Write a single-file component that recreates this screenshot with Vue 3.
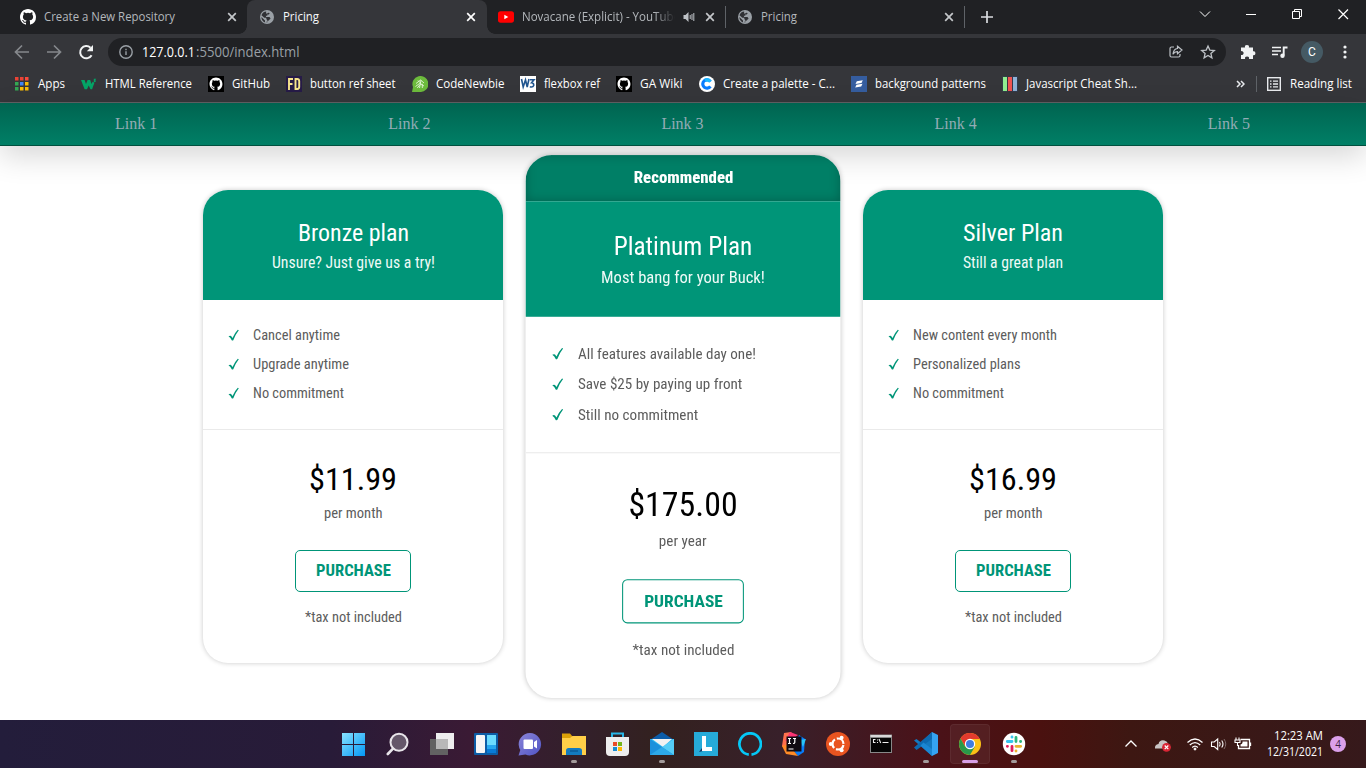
<script setup>
import { h } from 'vue'

// Single line of text fitted to a fixed advance width
const Fit = (p) =>
  h('svg', { class: 'fit', width: p.w, height: p.h || 16 }, [
    h('text', { x: 0, y: p.b || 12, textLength: p.w, lengthAdjust: 'spacingAndGlyphs' }, p.t),
  ])
Fit.props = ['t', 'w', 'h', 'b']

const GH = 'M8 0C3.58 0 0 3.58 0 8c0 3.54 2.29 6.53 5.47 7.59.4.07.55-.17.55-.38 0-.19-.01-.82-.01-1.49-2.01.37-2.53-.49-2.69-.94-.09-.23-.48-.94-.82-1.13-.28-.15-.68-.52-.01-.53.63-.01 1.08.58 1.23.82.72 1.21 1.87.87 2.33.66.07-.52.28-.87.51-1.07-1.78-.2-3.64-.89-3.64-3.95 0-.87.31-1.59.82-2.15-.08-.2-.36-1.02.08-2.12 0 0 .67-.21 2.2.82a7.6 7.6 0 0 1 4 0c1.53-1.04 2.2-.82 2.2-.82.44 1.1.16 1.92.08 2.12.51.56.82 1.27.82 2.15 0 3.07-1.87 3.75-3.65 3.95.29.25.54.73.54 1.48 0 1.07-.01 1.93-.01 2.2 0 .21.15.46.55.38A8 8 0 0 0 16 8c0-4.42-3.58-8-8-8z'

const tabs = [
  { id: 'gh', t: 'Create a New Repository', w: 131 },
  { id: 'p1', t: 'Pricing', w: 36, active: true },
  { id: 'yt', t: 'Novacane (Explicit) - YouTube', w: 158 },
  { id: 'p2', t: 'Pricing', w: 36 },
]
const marks = [
  { i: 'apps', t: 'Apps', w: 27 },
  { i: 'w3c', t: 'HTML Reference', w: 87 },
  { i: 'gh', t: 'GitHub', w: 38 },
  { i: 'fd', t: 'button ref sheet', w: 85.5 },
  { i: 'cn', t: 'CodeNewbie', w: 68.5 },
  { i: 'w3', t: 'flexbox ref', w: 56 },
  { i: 'gh', t: 'GA Wiki', w: 42.5 },
  { i: 'co', t: 'Create a palette - C...', w: 112 },
  { i: 'bg', t: 'background patterns', w: 111 },
  { i: 'js', t: 'Javascript Cheat Sh...', w: 111 },
]
const appColors = ['#ea4335', '#ea4335', '#fb4a3c', '#34a853', '#4285f4', '#fbbc04', '#34a853', '#fbbc04', '#fbbc04']
const plans = [
  {
    name: 'Bronze plan', nw: 111, sub: 'Unsure? Just give us a try!', sw: 163,
    items: [['Cancel anytime', 87], ['Upgrade anytime', 96], ['No commitment', 91]],
    price: '$11.99', pw: 88, per: 'per month', perw: 58.5,
  },
  {
    name: 'Platinum Plan', nw: 132, sub: 'Most bang for your Buck!', sw: 156, top: true,
    items: [['All features available day one!', 169.5], ['Save $25 by paying up front', 156.5], ['Still no commitment', 114.5]],
    price: '$175.00', pw: 104, per: 'per year', perw: 45.5,
  },
  {
    name: 'Silver Plan', nw: 100, sub: 'Still a great plan', sw: 100,
    items: [['New content every month', 144], ['Personalized plans', 107.5], ['No commitment', 91]],
    price: '$16.99', pw: 88, per: 'per month', perw: 58.5,
  },
]
const apps = ['start', 'search', 'task', 'widgets', 'chat', 'files', 'store', 'mail', 'L', 'alexa', 'ij', 'ubuntu', 'cmd', 'code', 'chrome', 'slack']
const running = ['files', 'mail', 'code', 'chrome', 'slack']
</script>

<template>
  <div class="screen">
    <div class="tabbar">
      <div v-for="tab in tabs" :key="tab.id" class="tab" :class="[tab.id, { active: tab.active }]">
        <svg v-if="tab.id === 'gh'" width="16" height="16" viewBox="0 0 16 16"><path :d="GH" fill="#fff" /></svg>
        <svg v-else-if="tab.id === 'yt'" width="16" height="16" viewBox="0 0 16 16"><rect y="2.3" width="16" height="11.4" rx="2.6" fill="#f00" /><path d="M6.3 5.7v4.6l4-2.3z" fill="#fff" /></svg>
        <svg v-else class="globe" width="14" height="14" viewBox="0 0 14 14"><circle cx="7" cy="7" r="7" fill="#9aa0a6" /><path d="M6.2 1.5C4 1.7 2.2 3 1.5 5.200l2.800 2.600h2v1.300l1 1.100v2.200c-.6.200-1.600.100-2.300-.200V10.600L1.400 7C1.300 10 3.600 12.600 6.800 12.700V11l1.600-.2 2.200-2.400-1.100-1.300H6.100l-.3-1.300h1.500V4.600h1.600l.8-1.500-1.500-.4-1 .9H6z" fill="#303135" /></svg>
        <Fit :t="tab.t" :w="tab.w" />
        <svg v-if="tab.id === 'yt'" class="sound" width="12" height="12" viewBox="0 0 12 12"><path d="M.5 4v4h2l3 3V1l-3 3z" fill="#bdc1c6" /><path d="M7.200 4v4M9 3v6M10.800 2v8" stroke="#bdc1c6" fill="none" /></svg>
        <svg class="close" width="12" height="12" viewBox="0 0 12 12"><path d="M2.200 2.200l7.600 7.600M9.800 2.200l-7.600 7.600" stroke="currentColor" stroke-width="1.700" /></svg>
      </div>
      <svg class="plus" width="12" height="12" viewBox="0 0 12 12"><path d="M6 0v12M0 6h12" stroke="#dadce0" stroke-width="1.700" /></svg>
      <svg class="winbtns" width="156" height="28" viewBox="0 0 156 28" fill="none" stroke="#fff" stroke-width="1">
        <path d="M10 11.500l5 5 5-5" /><path d="M56 14.500h10" /><path d="M102.500 11.500h7v7h-7zM104.500 11v-1.500h7v7H110" /><path d="M148.500 9.500l9.500 9.500M158 9.500l-9.500 9.500" stroke-width="1.200" />
      </svg>
    </div>

    <div class="toolbar">
      <svg class="navicons" width="94" height="36" viewBox="0 0 94 36" fill="none">
        <path d="M29 18H16M22 11.500L15.500 18l6.500 6.500M47 18h13M54 11.500l6.500 6.500-6.500 6.500" stroke="#85888c" stroke-width="1.700" />
        <path d="M91.600 21.200A6.100 6.100 0 1 1 90.500 13.800" stroke="#f1f3f4" stroke-width="2" /><path d="M93 11v6.200h-6.200z" fill="#f1f3f4" />
      </svg>
      <div class="omni">
        <svg width="16" height="16" viewBox="0 0 16 16" fill="none" stroke="#9aa0a6" stroke-width="1.400"><circle cx="8" cy="8" r="6.200" /><path d="M8 7.300v3.800M8 4.700v1.500" /></svg>
        <Fit class="host" t="127.0.0.1" :w="53" :h="20" :b="15" /><Fit class="path" t=":5500/index.html" :w="103.5" :h="20" :b="15" />
        <svg class="share" width="16" height="16" viewBox="0 0 16 16" fill="none" stroke="#bdc1c6" stroke-width="1.200"><path d="M6 3H3.500Q2 3 2 4.500v7Q2 13 3.500 13h7Q12 13 12 11.500V10" /><path d="M9.500 2.200L14 6l-4.500 3.800V7.700Q6.700 7.500 5 10.300 5.500 5 9.500 4.500z" /></svg>
        <svg class="star" width="16" height="16" viewBox="0 0 16 16"><path d="M8 2l1.800 4.100 4.500.4-3.400 2.900 1 4.400L8 11.500l-3.900 2.300 1-4.400-3.400-2.900 4.500-.4z" fill="none" stroke="#bdc1c6" stroke-width="1.300" /></svg>
      </div>
      <svg class="ext" width="16" height="16" viewBox="0 0 16 16"><path d="M1 3.500h4a2 2 0 1 1 3.900 0H13v3.800a2 2 0 1 1 0 3.900V15H9a2 2 0 1 0-3.900 0H1v-4a2 2 0 1 0 0-3.800z" fill="#f1f3f4" /></svg>
      <svg class="media" width="17" height="16" viewBox="0 0 17 16"><path d="M1 3.500h9M1 7h9M1 10.500h6" stroke="#f1f3f4" stroke-width="1.500" /><path d="M12.700 11.500V3.500h3.800" fill="none" stroke="#f1f3f4" stroke-width="1.900" /><circle cx="11.500" cy="11.800" r="2.200" fill="#f1f3f4" /></svg>
      <span class="avatar">C</span>
      <svg class="dots" width="4" height="14" viewBox="0 0 4 14" fill="#f1f3f4"><circle cx="2" cy="2" r="1.600" /><circle cx="2" cy="7" r="1.600" /><circle cx="2" cy="12" r="1.600" /></svg>
    </div>

    <div class="bookmarks">
      <div v-for="m in marks" :key="m.t" class="mark">
        <svg width="16" height="16" viewBox="0 0 16 16">
          <g v-if="m.i === 'apps'"><rect v-for="(c, n) in appColors" :key="n" :x="1 + (n % 3) * 5" :y="1 + Math.floor(n / 3) * 5" width="3.500" height="3.500" :fill="c" /></g>
          <path v-else-if="m.i === 'w3c'" d="M0 4h3.600l1.400 4L6.600 4h2.600l1.300 4 1.100-2.300 1.800 1-2.300 6.500H9.500L7.700 9.600 6 13.200H3.600zM12.800 2.800h2.500L14.100 4.300h.5q1 1.800-1.800 2" fill="#04a466" />
          <g v-else-if="m.i === 'gh'"><rect width="16" height="16" fill="#000" /><path :d="GH" fill="#fff" transform="translate(1.500 1.500) scale(.81)" /></g>
          <g v-else-if="m.i === 'fd'"><rect width="16" height="16" fill="#261b47" /><path d="M3 14V3h4M3 8h3.500M9.500 3v10h1.700q2-.2 2-2V5q0-2-2-2z" fill="none" stroke="#f7e58c" stroke-width="1.900" /></g>
          <g v-else-if="m.i === 'cn'"><path d="M0 16l1-5A8 8 0 1 1 8 16z" fill="#6cbb3c" /><path d="M4 7.500L8.500 4l3.500 3M6 4.500l3 3M9 4l-1.500 8M3.500 10.500l4-3 4.500 2.500M10.300 7.800v4.200M5.300 12l2.700-3.500" fill="none" stroke="#e6f5dd" stroke-width=".9" /></g>
          <g v-else-if="m.i === 'w3'"><rect width="16" height="16" fill="#fff" /><path d="M1.500 3l1.700 8L5.500 4l1.700 7L9 3M10 3.800h4l-2.500 3q2.500.3 2.200 2.700-.8 2.200-3.900 1.300" fill="none" stroke="#20558f" stroke-width="1.600" /></g>
          <g v-else-if="m.i === 'co'"><circle cx="8" cy="8" r="8" fill="#fff" /><path d="M11.400 5.600A4.200 4.200 0 1 0 11.400 10.400" fill="none" stroke="#087cff" stroke-width="3.200" /><path d="M11.400 5.600A4.200 4.200 0 0 0 6 4.400" fill="none" stroke="#19b8ff" stroke-width="3.200" /></g>
          <g v-else-if="m.i === 'bg'"><rect width="16" height="16" fill="#355d9f" /><path d="M5.800 5.300l6-1-1.300 2.700-6 1zM5.500 8.800l6-1-1.300 2.700-6 1z" fill="#fff" /></g>
          <g v-else stroke="#252b3d" stroke-width=".8"><path d="M.5.5h5v15h-5z" fill="#90ee90" /><path d="M5.500.5h5v15h-5z" fill="#ef5350" /><path d="M10.500.5h5v15h-5z" fill="#8fb2d6" /></g>
        </svg>
        <Fit :t="m.t" :w="m.w" />
      </div>
      <svg class="more" width="9" height="8" viewBox="0 0 9 8"><path d="M1 1l3 3-3 3M5 1l3 3-3 3" fill="none" stroke="#e8eaed" stroke-width="1.500" /></svg>
      <i class="sep"></i>
      <svg class="rl" width="14" height="14" viewBox="0 0 14 14" stroke="#e8eaed" fill="none"><rect x=".7" y=".7" width="12.600" height="12.600" stroke-width="1.400" /><path d="M3 4.200h1.500M6 4.200h5M3 7h1.500M6 7h5M3 9.800h1.500M6 9.800h5" stroke-width="1.300" /></svg>
      <Fit t="Reading list" :w="62" />
    </div>

    <main class="page">
      <nav><a v-for="n in 5" :key="n">Link {{ n }}</a></nav>
      <div class="cards">
        <section v-for="p in plans" :key="p.name" class="card" :class="{ top: p.top }">
          <div v-if="p.top" class="rec"><Fit t="Recommended" :w="95" :h="20" :b="16" /></div>
          <header>
            <Fit class="name" :t="p.name" :w="p.nw" :h="30" :b="24" />
            <Fit class="sub" :t="p.sub" :w="p.sw" :h="22" :b="21" />
          </header>
          <ul>
            <li v-for="it in p.items" :key="it[0]">
              <svg class="check" width="12" height="12" viewBox="0 0 12 12"><path d="M.5 7.200Q2 6.200 3.100 7L4.500 8.900Q6.500 4.200 9.800.8l1 .4Q7.500 5.300 5.300 11.300q-.6.500-1.400.2Q2.600 8.600.500 7.200z" fill="#009578" /></svg>
              <Fit :t="it[0]" :w="it[1]" :h="19" :b="15" />
            </li>
          </ul>
          <div class="pay">
            <Fit class="price" :t="p.price" :w="p.pw" :h="38" :b="31" />
            <Fit :t="p.per" :w="p.perw" :h="18" :b="14" />
            <button><Fit t="PURCHASE" :w="75" :h="20" :b="16" /></button>
            <Fit t="*tax not included" :w="97" :h="18" :b="14" />
          </div>
        </section>
      </div>
    </main>

    <footer class="taskbar">
      <div v-for="a in apps" :key="a" class="app" :class="{ current: a === 'chrome', run: running.includes(a) }">
        <svg width="24" height="24" viewBox="0 0 24 24">
          <g v-if="a === 'start'" fill="url(#win)"><defs><linearGradient id="win" x1="0" y1="0" x2="24" y2="24" gradientUnits="userSpaceOnUse"><stop stop-color="#8be4ff" /><stop offset="1" stop-color="#0096f5" /></linearGradient></defs><path d="M0 1h11v11H0zM12 1h11v11H12zM0 13h11v11H0zM12 13h11v11H12z" /></g>
          <g v-else-if="a === 'search'" fill="#65576a" stroke="#e8e5ea"><circle cx="13" cy="10.200" r="8.500" stroke-width="2" /><path d="M7 16.700L1.800 22" stroke-width="2.600" stroke-linecap="round" /></g>
          <g v-else-if="a === 'task'"><path d="M6 1h18v16H6z" fill="#eee" /><path d="M0 7h18v16H0z" fill="#626262" /><path d="M6 7h12v10H6z" fill="#b8b8b8" /></g>
          <g v-else-if="a === 'widgets'"><rect y="1" width="24" height="22" rx="1" fill="#0c5da6" /><rect x="2" y="3" width="9" height="18" rx="1" fill="#f6f6f6" /><path d="M13 3h9v10h-9z" fill="#6bdcff" /><path d="M13 13h9v4h-9z" fill="#26a8f0" /><path d="M13 17h9v4h-9z" fill="#087bd7" /></g>
          <g v-else-if="a === 'chat'"><defs><linearGradient id="cht" x1="0" y1="0" x2="1" y2="1"><stop stop-color="#8a84d8" /><stop offset="1" stop-color="#5054c4" /></linearGradient></defs><path d="M.5 23.500l1.800-5.500A11.200 11.200 0 1 1 7.500 22.500z" fill="url(#cht)" /><rect x="5.500" y="7.500" width="9.500" height="9.500" rx="1" fill="#fff" /><path d="M16 10l3-2v8.500l-3-2z" fill="#fff" /></g>
          <g v-else-if="a === 'files'"><path d="M0 1.500h8l2.500 3H24v17H0z" fill="#dca108" /><path d="M0 6h8l2.500-2H24v19H0z" fill="#ffcf48" /><path d="M4 23v-4.500Q4 16 6.500 16h10.500Q20 16 20 18.500V23z" fill="#137bc0" /><path d="M8 19h8" stroke="#0b5b9a" stroke-width="1.500" /></g>
          <g v-else-if="a === 'store'"><path d="M6 6V1.500h11V6" fill="none" stroke="#29b7e8" stroke-width="2" /><path d="M0 5h23v15q0 4-4 4H4q-4 0-4-4z" fill="#eee" /><path d="M7 10h4v4H7z" fill="#e94b28" /><path d="M12 10h4v4h-4z" fill="#74b51a" /><path d="M7 15h4v4H7z" fill="#168bd2" /><path d="M12 15h4v4h-4z" fill="#ffb900" /></g>
          <g v-else-if="a === 'mail'"><path d="M0 8l12-8 12 8z" fill="#0b5ca8" /><path d="M0 7h24v16H0z" fill="#2bb8f0" /><path d="M2 7h20l-9 8z" fill="#f2f2f2" /><path d="M0 7l24 16H0z" fill="#1b91dc" /><path d="M24 7v16L12 15z" fill="#55cdf6" /><path d="M12 15L24 23H0z" fill="#2da9e8" /></g>
          <g v-else-if="a === 'L'"><path d="M0 0h24v24H0z" fill="#26abd9" /><path d="M8 4v12l-3 4 4-1 3-3z" fill="#12355f" /><path d="M8 4h4v11h6v4H8z" fill="#fff" /></g>
          <path v-else-if="a === 'alexa'" d="M10.800 22.600A10.700 10.700 0 1 1 13.500 22.600" fill="none" stroke="#05c8f6" stroke-width="2.700" />
          <g v-else-if="a === 'ij'"><path d="M2 1l7-1 4 5-9 13-4-4z" fill="#ff704d" /><path d="M8 0l8 3-5 4-8 2z" fill="#fc3475" /><path d="M17 3l6 4-1 13-6 4-5-6z" fill="#087cfa" /><path d="M0 14l6-2 10 12-12-2z" fill="#ff8b27" /><path d="M18 8l6-1-3 8z" fill="#29c5fa" /><rect x="4.500" y="4.500" width="15" height="15" fill="#100b12" /><path d="M6 6.500h3M7.500 6.500v5M6 11.500h3M11 6.500h3M12.800 6.500v4q0 1-1.800 1M6.500 17h5" fill="none" stroke="#fff" stroke-width="1.200" /></g>
          <g v-else-if="a === 'ubuntu'"><circle cx="12" cy="12" r="12" fill="#e95420" /><circle cx="12" cy="12" r="5.500" fill="none" stroke="#fff" stroke-width="2.200" stroke-dasharray="9.500 2.010" stroke-dashoffset="-1" /><circle cx="4.800" cy="12" r="2" fill="#fff" /><circle cx="15.600" cy="5.800" r="2" fill="#fff" /><circle cx="15.600" cy="18.200" r="2" fill="#fff" /></g>
          <g v-else-if="a === 'cmd'"><rect x="0" y="2.500" width="22" height="18.500" fill="#888" /><path d="M.5 3h21v2h-21z" fill="#d8d8d8" /><path d="M1 6h20v14H1z" fill="#050505" /><path d="M5.500 7.500H3.500v3h2M7.500 7.500v1M7.500 10v1M9 7l1.700 4M12.500 10.500h6" stroke="#eee" stroke-width="1.100" fill="none" /></g>
          <g v-else-if="a === 'code'"><path d="M18 0L7 10.500 2.500 7 0 8.500 18 24z" fill="#1478bf" /><path d="M18 0v7L2.500 18 0 15.500z" fill="#0d69b0" /><path d="M18 24L6.500 13.500 9.500 10.500 18 17z" fill="#1b86d3" /><path d="M18 0l6 3v18l-6 3z" fill="#35a3f2" /></g>
          <g v-else-if="a === 'chrome'"><circle cx="12" cy="12" r="11" fill="#fbc116" /><path d="M12 12V7h9.800A11 11 0 0 0 2.500 6.500L7.200 14.500z" fill="#e33b2e" /><path d="M12 12L16.800 14.700 12 23A11 11 0 0 1 2.500 6.500L7.200 14.700z" fill="#29994a" /><circle cx="12" cy="12" r="5.200" fill="#fff" /><circle cx="12" cy="12" r="4" fill="#3f7de0" /></g>
          <g v-else fill="none" stroke-width="2.800" stroke-linecap="round"><circle cx="12" cy="12" r="11.200" fill="#fff" /><path d="M10 5v.2M10 9.500H5.300" stroke="#36c5f0" /><path d="M14 5.300V9.500M18.500 9.500h.2" stroke="#2eb67d" /><path d="M14 18.800v.2M14 14.300h4.700" stroke="#ecb22e" /><path d="M10 14.300v4.400M5.300 14.300h.2" stroke="#e01e5a" /></g>
        </svg>
      </div>
      <div class="tray">
        <svg width="156" height="24" viewBox="0 0 156 24" fill="none" stroke="#fff">
          <path d="M5.500 14.500L11 9l5.500 5.500" stroke-width="1.300" />
          <path d="M35 16.500q-.5-4 3.500-4.500 1-4.500 6-3.500 3 .7 3.500 3.500 3 1 2 4.500z" fill="#c9c5c4" stroke="none" /><circle cx="46.500" cy="15.300" r="4.400" fill="#d92534" stroke="none" /><path d="M44.700 13.500l3.600 3.600M48.300 13.500l-3.600 3.600" stroke-width="1.200" />
          <path d="M67.500 10.500q7.500-7 15 0M69.800 13q5.200-4.800 10.400 0M72.200 15.400q2.800-2.600 5.600 0" stroke-width="1.300" /><circle cx="75" cy="17" r="1" fill="#fff" />
          <path d="M91.500 10v4.500h2.700l3.500 3V7l-3.500 3zM99.500 10q1.400 2 0 4.500M101.700 8.500q2.600 3.500 0 7" stroke-width="1.100" /><path d="M104 7q3.500 5 0 10" stroke="#806a6a" />
          <path d="M120.500 7.500h9v9h-11v-3.500M130.500 10.500v3.500" stroke-width="1.300" /><path d="M122.500 9.500h5V14.500h-7v-2q2-.5 2-2z" fill="#fff" stroke="none" /><path d="M116 5.500v3M119 5.500v3M115 8h5v2.500h-5zM117.500 10v4" stroke-width="1.100" />
        </svg>
        <div class="clock"><Fit t="12:23 AM" :w="49" :h="16" /><Fit t="12/31/2021" :w="56" :h="16" /></div>
        <span class="count">4</span>
      </div>
    </footer>
  </div>
</template>

<style>
html, body { margin: 0; overflow: hidden; background: #fff; }
</style>

<style scoped>
.screen { width: 1366px; height: 768px; display: flex; flex-direction: column; overflow: hidden; font-family: "Open Sans", "Noto Sans", sans-serif; font-size: 12px; }
.screen * { box-sizing: border-box; }
svg { display: block; flex: none; }
.fit { overflow: visible; fill: currentColor; }
.tabbar { height: 34px; background: #202124; display: flex; flex: none; align-items: center; }
.tab { width: 239px; height: 34px; display: flex; align-items: center; gap: 8px; padding: 0 10px 0 11px; color: #b4b8bc; position: relative; }
.tab.gh { width: 247px; padding: 0 9px 0 20px; }
.tab.p1 { width: 240px; padding-left: 13px; color: #f8f9fa; background: #35363a; border-radius: 8px 8px 0 0; }
.tab .globe { margin-right: 1px; }
.tab.p1 .close { color: #fff; }
.tab.p1::before, .tab.p1::after { content: ""; position: absolute; bottom: 0; width: 8px; height: 8px; }
.tab.p1::before { left: -8px; background: radial-gradient(circle at 0 0, #202124 7.5px, #35363a 8px); }
.tab.p1::after { right: -8px; background: radial-gradient(circle at 100% 0, #202124 7.5px, #35363a 8px); }
.tab.yt, .tab.p2 { border-right: 1px solid transparent; border-image: linear-gradient(transparent 7px, #5f6368 7px, #5f6368 27px, transparent 27px) 1; padding-right: 9px; }
.tab.p2 { padding-left: 12px; }
.tab.yt .fit { width: 153px; overflow: hidden; mask-image: linear-gradient(90deg, #000 132px, transparent 153px); }
.close { margin-left: auto; color: #c4c7ca; }
.plus { margin-left: 16px; }
.winbtns { margin-left: auto; margin-right: 20px; align-self: flex-start; overflow: visible; }
.toolbar { height: 36px; flex: none; background: #35363a; display: flex; align-items: center; }
.navicons { margin-right: 14px; }
.omni { width: 1118px; height: 28px; border-radius: 14px; background: #202124; display: flex; align-items: center; padding: 0 10px; font-size: 14px; }
.host { margin-left: 8px; color: #fff; }
.path { color: #9aa0a6; margin-left: .5px; }
.share { margin-left: auto; margin-right: 16px; }
.ext { margin-left: 14px; }
.media { margin-left: 15px; }
.avatar { width: 22px; height: 22px; margin-left: 13px; border-radius: 50%; background: #455a64; color: #fff; display: grid; place-items: center; font: 12px Roboto, sans-serif; }
.dots { margin-left: 20px; }
.bookmarks { height: 33px; flex: none; background: #35363a; border-bottom: 1px solid #606164; display: flex; align-items: center; padding: 0 14px 4px; color: #fff; }
.mark { display: flex; gap: 8px; margin-right: 16px; }
.more { margin-left: auto; margin-right: 11px; }
.sep { width: 1px; height: 16px; background: #5f6368; margin-right: 10px; }
.rl { margin-right: 9px; }
.page { flex: 1; background: #fff; font-family: "Roboto Condensed", Roboto, sans-serif; font-stretch: 75%; min-height: 0; }
nav { height: 43px; display: flex; background: linear-gradient(#006450, #007f66); border-bottom: 1px solid #00513f; box-shadow: 0 10px 30px rgba(0, 0, 0, .16); font: 16px "Liberation Serif", serif; color: #93acb5; line-height: 42px; text-align: center; }
nav a { flex: 1; padding-right: 1px; }
.cards { display: flex; justify-content: center; align-items: center; gap: 30px; height: 517px; margin-top: 22px; }
.card { width: 300px; border-radius: 25px; overflow: hidden; background: #fff; box-shadow: 0 0 5px rgba(0, 0, 0, .22); color: #5c5c5c; font-size: 14px; }
.card.top { transform: scale(1.05); }
.rec { height: 44px; background: #007f66; box-shadow: inset 0 0 10px rgba(0, 0, 0, .25); color: #fff; font-size: 16px; font-weight: 800; display: flex; justify-content: center; padding-top: 11px; }
header { height: 110px; background: #009578; color: #fff; display: flex; flex-direction: column; align-items: center; padding-top: 27px; }
.name { font-size: 24px; font-weight: 400; }
.sub { font-size: 16px; font-weight: 400; fill: #effaf7; }
ul { list-style: none; margin: 0; padding: 25px; height: 130px; border-bottom: 1px solid #eaeaea; display: flex; flex-direction: column; gap: 10px; }
li { display: flex; align-items: center; gap: 13px; height: 19px; }
.pay { height: 233px; display: flex; flex-direction: column; align-items: center; padding-top: 29px; }
.price { font-size: 32px; font-weight: 400; color: #000; margin-bottom: 7px; }
button { margin: 28px 0 16px; width: 116px; height: 42px; flex: none; border: 1px solid #009578; border-radius: 5px; background: #fff; color: #009578; font-family: inherit; font-stretch: inherit; font-size: 16px; font-weight: 700; display: flex; justify-content: center; padding: 9px 0 0; }
.taskbar { height: 48px; flex: none; display: flex; padding-left: 332px; background: linear-gradient(90deg, #231d3b 0, #281b38 330px, #3a1a34 470px, #33202b 580px, #33211f 660px, #38202a 780px, #4a1219 930px, #4a110f 1040px, #3d1712 1130px, #36191b 1366px); }
.app { width: 44px; height: 48px; display: grid; place-items: center; position: relative; }
.app.run::after { content: ""; position: absolute; bottom: 5px; left: 19px; width: 6px; height: 3px; border-radius: 2px; background: #a39b9b; }
.app.current svg { position: relative; z-index: 1; }
.app.current::before { content: ""; position: absolute; inset: 4px 2px; border-radius: 4px; background: rgba(255, 255, 255, .06); border: 1px solid rgba(255, 255, 255, .05); }
.app.current::after { left: 14px; width: 16px; background: #d9a0e6; }
.tray { margin-left: auto; display: flex; align-items: center; padding-right: 20px; color: #fff; }
.clock { display: flex; flex-direction: column; align-items: flex-end; width: 47px; margin-left: -1px; }
.clock .fit { margin-right: -1px; }
.count { width: 16px; height: 16px; border-radius: 50%; margin-left: 8px; background: #dba0ea; color: #3c2340; display: grid; place-items: center; font-size: 10px; }
</style>
